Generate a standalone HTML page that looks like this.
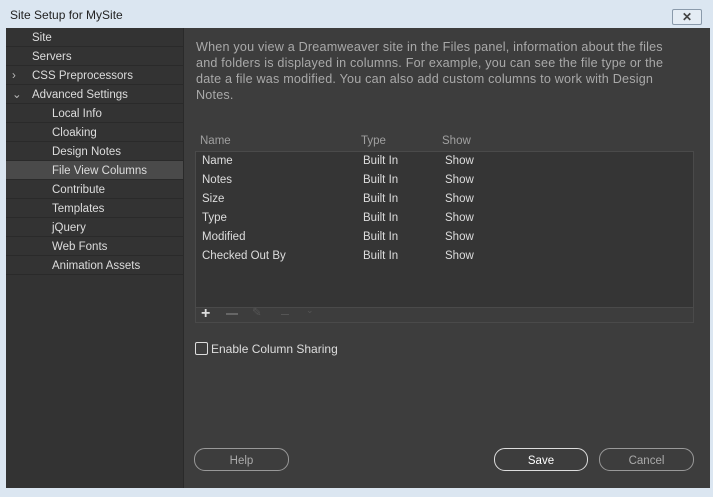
<!DOCTYPE html><html><head><style>
body{margin:0;width:713px;height:497px;background:#dbe6f1;font-family:"Liberation Sans",sans-serif;font-size:11.5px;position:relative;overflow:hidden}
.t{position:absolute;left:10px;top:8px;color:#222;font-size:12px}
.x{position:absolute;left:672px;top:9px;width:28px;height:14px;border:1px solid #8a9aab;border-radius:2px;background:#e4ecf4;color:#444;font-size:12px;text-align:center;line-height:14px;font-weight:bold}
.win{position:absolute;left:6px;top:28px;width:704px;height:460px;background:#3d3d3d}
.side{position:absolute;left:0;top:0;width:177px;height:460px;background:#333;border-right:1px solid #2a2a2a}
.it{height:18px;line-height:20px;border-bottom:1px solid #2a2a2a;color:#ddd;padding-left:26px;position:relative}
.it.s{padding-left:46px}
.it.sel{background:#4a4a4a}
.ar{position:absolute;left:6px;color:#bbb}
.desc{position:absolute;left:190px;top:11px;width:520px;color:#a9a9a9;font-size:12.6px;line-height:16px;letter-spacing:0.2px}
.hd{position:absolute;top:107px;color:#a0a0a0}
.tbl{position:absolute;left:189px;top:123px;width:497px;height:155px;background:#353535;border:1px solid #4a4a4a}
.r{position:absolute;color:#ddd;margin-top:1px}
.tb{position:absolute;left:189px;top:279px;width:497px;height:15px;border:1px solid #4a4a4a;border-top:none;color:#ddd}
.cb{position:absolute;left:189px;top:314px;width:11px;height:11px;border:1.5px solid #ddd;border-radius:2px}
.btn{position:absolute;top:420px;height:21px;border:1px solid #999;border-radius:11px;text-align:center;line-height:24px;color:#aaa}
</style></head><body>
<div class="t">Site Setup for MySite</div><div class="x">✕</div>
<div class="win">
<div class="side">
<div class="it">Site</div><div class="it">Servers</div>
<div class="it"><span class="ar">›</span>CSS Preprocessors</div>
<div class="it"><span class="ar">⌄</span>Advanced Settings</div>
<div class="it s">Local Info</div><div class="it s">Cloaking</div><div class="it s">Design Notes</div>
<div class="it s sel">File View Columns</div><div class="it s">Contribute</div><div class="it s">Templates</div><div class="it s">jQuery</div><div class="it s">Web Fonts</div><div class="it s">Animation Assets</div>
</div>
<div class="desc">When you view a Dreamweaver site in the Files panel, information about the files<br>and folders is displayed in columns. For example, you can see the file type or the<br>date a file was modified. You can also add custom columns to work with Design<br>Notes.</div>
<div class="hd" style="left:194px">Name</div><div class="hd" style="left:355px">Type</div><div class="hd" style="left:436px">Show</div>
<div class="tbl">
<div class="r" style="left:6px;top:2px">Name</div><div class="r" style="left:167px;top:2px">Built In</div><div class="r" style="left:249px;top:2px">Show</div>
<div class="r" style="left:6px;top:21px">Notes</div><div class="r" style="left:167px;top:21px">Built In</div><div class="r" style="left:249px;top:21px">Show</div>
<div class="r" style="left:6px;top:40px">Size</div><div class="r" style="left:167px;top:40px">Built In</div><div class="r" style="left:249px;top:40px">Show</div>
<div class="r" style="left:6px;top:59px">Type</div><div class="r" style="left:167px;top:59px">Built In</div><div class="r" style="left:249px;top:59px">Show</div>
<div class="r" style="left:6px;top:78px">Modified</div><div class="r" style="left:167px;top:78px">Built In</div><div class="r" style="left:249px;top:78px">Show</div>
<div class="r" style="left:6px;top:97px">Checked Out By</div><div class="r" style="left:167px;top:97px">Built In</div><div class="r" style="left:249px;top:97px">Show</div>
</div>
<div class="tb"><span style="position:absolute;left:5px;top:-2px;font-size:16px;font-weight:bold">+</span><span style="position:absolute;left:30px;top:6px;width:12px;height:2px;background:#666"></span><span style="position:absolute;left:56px;top:-2px;color:#555">✎</span><span style="position:absolute;left:85px;top:7px;width:8px;height:1px;background:#555"></span><span style="position:absolute;left:110px;top:-2px;color:#555;font-size:9px">⌄</span></div>
<div class="cb"></div><div class="r" style="left:205px;top:313px;font-size:12px">Enable Column Sharing</div>
<div class="btn" style="left:188px;width:93px">Help</div>
<div class="btn" style="left:488px;width:92px;border-color:#ddd;color:#fff">Save</div>
<div class="btn" style="left:593px;width:93px">Cancel</div>
</div>
</body></html>
